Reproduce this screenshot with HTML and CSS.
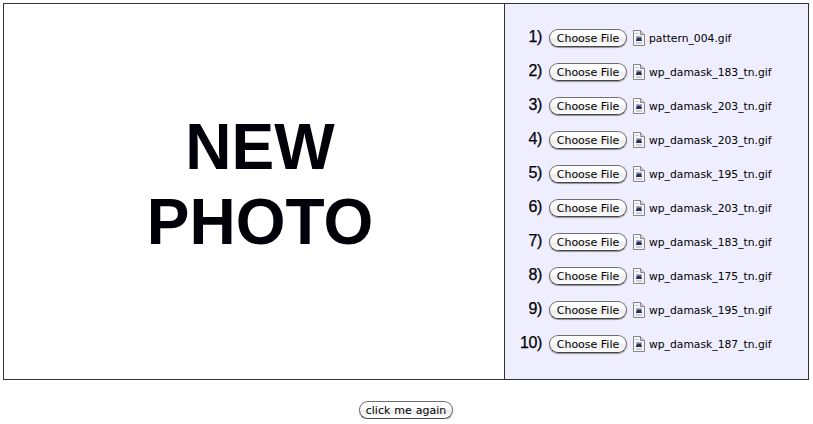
FILE: index.html
```html
<!DOCTYPE html>
<html lang="en">
<head>
  <meta charset="UTF-8" />
  <title>New Photo</title>
  <link rel="stylesheet" href="styles.css">
</head>
<body>

  <svg class="sprite" width="0" height="0">
    <symbol id="doc" viewBox="0 0 12 16">
      <path d="M.5.5h7l4 4v11h-11z" fill="#f6f6f8" stroke="#85858a"/>
      <path d="M7.500.5v4h4" fill="#d4d4da" stroke="#85858a"/>
      <rect x="3" y="6" width="6" height="5" fill="#a9b0c8"/>
      <path d="M3 10l2-3 1.500 1 1-1 1.500 4H3z" fill="#27305c"/>
      <path d="M3 13h6" stroke="#a8a8ae"/>
      <path d="M2.500 3.500h3" stroke="#c4c4c8"/>
    </symbol>
  </svg>

  <div class="frame">
    <div class="photo">NEW<br>PHOTO</div>

    <div class="files">
      <div class="row"><span class="num">1)</span><button class="btn">Choose File</button><svg class="doc"><use href="#doc"/></svg><span class="name">pattern_004.gif</span></div>
      <div class="row"><span class="num">2)</span><button class="btn">Choose File</button><svg class="doc"><use href="#doc"/></svg><span class="name">wp_damask_183_tn.gif</span></div>
      <div class="row"><span class="num">3)</span><button class="btn">Choose File</button><svg class="doc"><use href="#doc"/></svg><span class="name">wp_damask_203_tn.gif</span></div>
      <div class="row"><span class="num">4)</span><button class="btn">Choose File</button><svg class="doc"><use href="#doc"/></svg><span class="name">wp_damask_203_tn.gif</span></div>
      <div class="row"><span class="num">5)</span><button class="btn">Choose File</button><svg class="doc"><use href="#doc"/></svg><span class="name">wp_damask_195_tn.gif</span></div>
      <div class="row"><span class="num">6)</span><button class="btn">Choose File</button><svg class="doc"><use href="#doc"/></svg><span class="name">wp_damask_203_tn.gif</span></div>
      <div class="row"><span class="num">7)</span><button class="btn">Choose File</button><svg class="doc"><use href="#doc"/></svg><span class="name">wp_damask_183_tn.gif</span></div>
      <div class="row"><span class="num">8)</span><button class="btn">Choose File</button><svg class="doc"><use href="#doc"/></svg><span class="name">wp_damask_175_tn.gif</span></div>
      <div class="row"><span class="num">9)</span><button class="btn">Choose File</button><svg class="doc"><use href="#doc"/></svg><span class="name">wp_damask_195_tn.gif</span></div>
      <div class="row"><span class="num">10)</span><button class="btn">Choose File</button><svg class="doc"><use href="#doc"/></svg><span class="name">wp_damask_187_tn.gif</span></div>
    </div>
  </div>

  <div class="actions">
    <button class="btn again">click me again</button>
  </div>

</body>
</html>
```

FILE: styles.css
```css
body {
  margin: 0;
  padding: 3px 4px 0 3px;
  background: #fff;
  font-family: "DejaVu Sans", sans-serif;
  color: #000;
}

.sprite {
  display: block;
  height: 0;
}

.frame {
  display: flex;
  height: 375px;
  border: 1px solid #333;
}

.photo {
  box-sizing: border-box;
  width: 500px;
  padding: 0 0 14px 12px;
  display: flex;
  align-items: center;
  justify-content: center;
  text-align: center;
  font-family: "Liberation Sans", Arial, sans-serif;
  font-size: 64px;
  font-weight: bold;
  line-height: 75px;
  color: #000008;
}

.files {
  flex: 1;
  padding-top: 17px;
  background: #eeeeff;
  border-left: 1px solid #333;
}

.row {
  display: flex;
  align-items: center;
  height: 34px;
}

.num {
  width: 37px;
  margin-right: 7px;
  padding-bottom: 2px;
  text-align: right;
  font-family: "Liberation Sans", Arial, sans-serif;
  font-size: 16px;
  letter-spacing: -0.4px;
  -webkit-text-stroke: 0.25px #000;
}

.btn {
  width: 78px;
  height: 18px;
  padding: 0;
  border: 1px solid #6e6e6e;
  border-bottom-color: #444;
  border-radius: 9px;
  background: linear-gradient(#fff 35%, #ececec 60%, #fff);
  box-shadow: 0 1px 1px rgba(0, 0, 0, 0.4);
  font-family: "DejaVu Sans", sans-serif;
  font-size: 11px;
  color: #000;
}

.doc {
  width: 12px;
  height: 16px;
  margin: 0 4px 0 6px;
}

.name {
  font-size: 10.75px;
}

.actions {
  display: flex;
  justify-content: center;
  padding-top: 21px;
}

.again {
  width: 94px;
  word-spacing: 0.5px;
}
```
